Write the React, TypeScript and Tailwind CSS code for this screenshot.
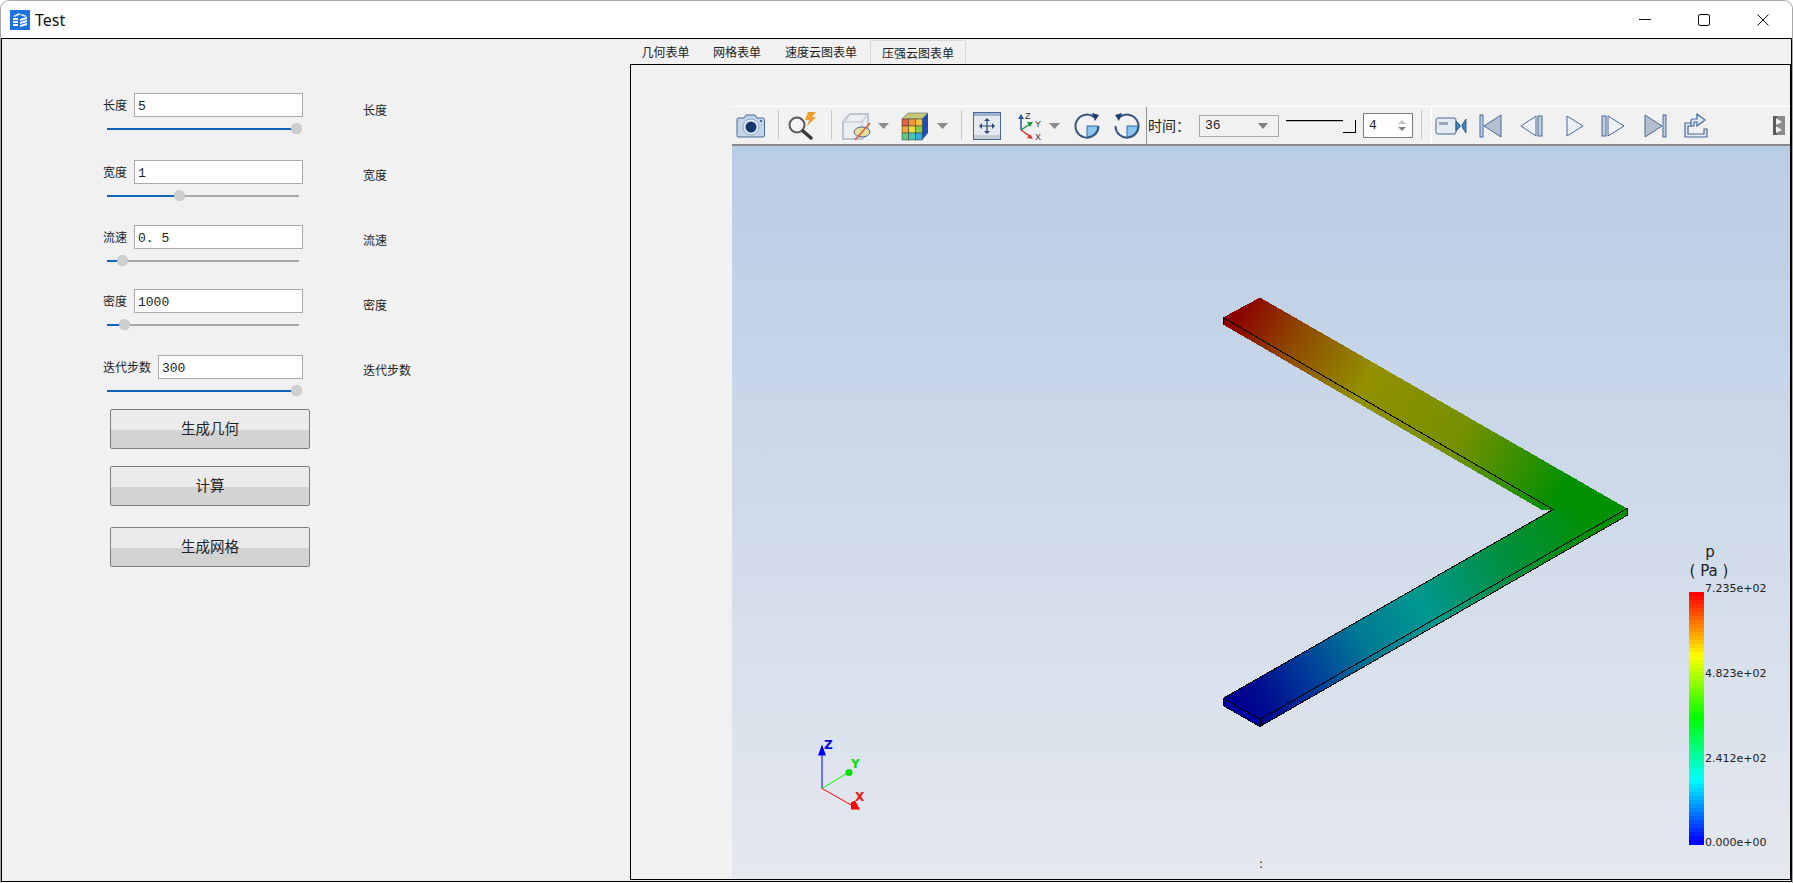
import React from 'react';

const cjk = "font-['Noto_Sans_CJK_SC','Noto_Sans',sans-serif]";

type Field = {
  label: string;
  value: string;
  handle: number;
  rowClass: string;
  noteClass: string;
};

// handle = pixels from the left end of the slider track
const fields: Field[] = [
  { label: '长度', value: '5', handle: 189, rowClass: 'mt-0', noteClass: 'mt-[9px]' },
  { label: '宽度', value: '1', handle: 72, rowClass: 'mt-[19px]', noteClass: 'mt-[7px]' },
  { label: '流速', value: '0. 5', handle: 15, rowClass: 'mt-[17px]', noteClass: 'mt-[7px]' },
  { label: '密度', value: '1000', handle: 17, rowClass: 'mt-[16px]', noteClass: 'mt-[8px]' },
  { label: '迭代步数', value: '300', handle: 189, rowClass: 'mt-[18px]', noteClass: 'mt-[7px]' },
];

const FormRow = ({ field }: { field: Field }) => (
  <div className={`flex items-start ${field.rowClass}`}>
    <div className="w-[200px]">
      <div className="flex h-[24px] items-center gap-[7px]">
        <span className={`${cjk} text-[12px] leading-none whitespace-nowrap text-[#222]`}>{field.label}</span>
        <input
          readOnly
          value={field.value}
          className="h-[24px] min-w-0 flex-1 border border-[#a9a9a9] bg-white px-[3px] pt-[2px] font-['Liberation_Mono',monospace] text-[13px] text-[#222] outline-none"
        />
      </div>
      <div className="relative ml-[4px] h-[24px] w-[192px]">
        <div className="absolute top-[11px] left-0 h-[2px] w-full bg-[#a9a9a9]" />
        <div className="absolute top-[11px] left-0 h-[2px] bg-[#0f66b8]" style={{ width: field.handle }} />
        <div
          className="absolute top-[6px] h-[11px] w-[11px] rounded-full border border-dotted border-[#bdbdbd] bg-[#cfcfcf]"
          style={{ left: field.handle - 5 }}
        />
      </div>
    </div>
    <span className={`${cjk} ml-[60px] text-[12px] leading-[16px] whitespace-nowrap text-[#222] ${field.noteClass}`}>
      {field.label}
    </span>
  </div>
);

const ActionButton = ({ text, className }: { text: string; className: string }) => (
  <button
    className={`${cjk} ml-[7px] flex h-[40px] w-[200px] items-center justify-center rounded-[2px] border border-[#7f7f7f] bg-[linear-gradient(#ebebeb_52%,#d3d3d3_52%)] pb-[2px] text-[14.5px] text-[#222] ${className}`}
  >
    {text}
  </button>
);

const Sep = ({ className }: { className: string }) => <div className={`h-[30px] w-[1px] bg-[#c8c8c8] ${className}`} />;

const Slot = ({ className = '', children }: { className?: string; children: React.ReactNode }) => (
  <div className={`flex h-full w-[38px] shrink-0 items-center justify-center ${className}`}>{children}</div>
);

const Caret = ({ className = '' }: { className?: string }) => (
  <div className={`flex h-full w-[14px] shrink-0 items-center justify-center ${className}`}>
    <svg width="13" height="8" viewBox="0 0 13 8">
      <path d="M1 1h11L6.500 7z" fill="#8a8a8a" />
    </svg>
  </div>
);

const AppLogo = () => (
  <svg width="20" height="20" viewBox="0 0 20 20">
    <rect width="20" height="20" fill="#1a73e0" />
    <path d="M3 6l6-3 2 1-6 3zM12 4l5 2-2 1-5-2z" fill="#dcebff" />
    <path d="M3 8h5v2H3zM3 11h5v2H3zM3 14h5v2H3z" fill="#fff" />
    <path d="M10 9l7-2v2l-7 2zM10 12l7-2v2l-7 2zM10 15l7-2v2l-7 2z" fill="#fff" />
  </svg>
);

const CameraIcon = () => (
  <svg width="30" height="26" viewBox="0 0 30 26">
    <path d="M2 5h6l2-3h9l2 3h6q1.500 0 1.500 1.500v16q0 1.500-1.500 1.500H2q-1 0-1-1.500v-16Q1 5 2 5z" fill="#c3d4e8" stroke="#47699a" />
    <circle cx="15" cy="14" r="8" fill="#e4ebf3" stroke="#8ea6c4" />
    <circle cx="15" cy="14" r="5.500" fill="#17366e" />
    <rect x="24" y="7" width="2" height="2" fill="#47699a" />
  </svg>
);

const ZoomIcon = () => (
  <svg width="32" height="30" viewBox="0 0 32 30">
    <circle cx="11" cy="14" r="7.500" fill="#f4f4f4" stroke="#5a5a5a" strokeWidth="2" />
    <path d="M17 20l8 7" stroke="#3a3a3a" strokeWidth="3.500" strokeLinecap="round" />
    <path d="M22 1h8l-4 5h4l-9 9 2-6h-4z" fill="#ef9f2e" />
  </svg>
);

const ClipIcon = () => (
  <svg width="32" height="30" viewBox="0 0 32 30">
    <path d="M2 11l7-8h18v19l-6 6H2z" fill="#eceef2" stroke="#bcc5d3" strokeWidth="2" />
    <path d="M2 11h19l6-8M21 11v17" fill="none" stroke="#c9d0db" strokeWidth="1.500" />
    <ellipse cx="21" cy="21" rx="8" ry="5" fill="#e6dc9c" stroke="#47699a" />
    <path d="M14 29L29 12" stroke="#d8582a" strokeWidth="1.500" />
  </svg>
);

const ScalarCubeIcon = () => {
  const cols = ['#e8603a', '#ef9b3a', '#f2c23c', '#f0a83a', '#e8dc3e', '#86d04c', '#5ec880', '#47c8b0', '#39a8e0'];
  return (
    <svg width="30" height="30" viewBox="0 0 30 30">
      <path d="M1 8l6-6h20l-6 6z" fill="#c8c878" stroke="#3a4a5a" strokeWidth="0.500" />
      <path d="M21 8l6-6v20l-6 7z" fill="#1c4fb8" />
      {cols.map((c, i) => (
        <rect key={i} x={1 + (i % 3) * 6.800} y={8 + Math.floor(i / 3) * 7} width="6.800" height="7" fill={c} stroke="#3a3a3a" strokeWidth="0.500" />
      ))}
    </svg>
  );
};

const FitIcon = () => (
  <svg width="28" height="30" viewBox="0 0 28 30">
    <rect x="0.500" y="1.500" width="27" height="27" fill="#e5e8ee" stroke="#47699a" />
    <rect x="1" y="2" width="26" height="3" fill="#9fb2cc" />
    <rect x="1" y="24" width="26" height="4" fill="#c6ccd6" />
    <path d="M14 9v12M8 15h12" stroke="#2e4a73" strokeWidth="1.200" />
    <path d="M14 7l-3 3h6zM14 23l-3-3h6zM6 15l3-3v6zM22 15l-3-3v6z" fill="#2e4a73" />
  </svg>
);

const AxesIcon = () => (
  <svg width="32" height="32" viewBox="0 0 32 32">
    <path d="M9 20V7" stroke="#2a56a8" strokeWidth="1.500" />
    <path d="M9 4l-3 5h6z" fill="#2a56a8" />
    <path d="M9 20l9-6" stroke="#1c9a3c" strokeWidth="1.500" />
    <path d="M21 12l-6 0 3 5z" fill="#1c9a3c" />
    <path d="M9 20l10 7" stroke="#e03030" strokeWidth="1.500" />
    <path d="M21 29l-6-1 3-4z" fill="#e03030" />
    <text x="13" y="9" className="font-['Liberation_Sans',sans-serif] text-[9px]" fill="#333">Z</text>
    <text x="23" y="17" className="font-['Liberation_Sans',sans-serif] text-[9px]" fill="#333">Y</text>
    <text x="23" y="30" className="font-['Liberation_Sans',sans-serif] text-[9px]" fill="#333">X</text>
  </svg>
);

// the quadrant stays lower right in both, only the arrow changes side
const RotateIcon = ({ flip = false }: { flip?: boolean }) => (
  <svg width="30" height="30" viewBox="0 0 30 30">
    <path d="M15 15h11a11 11 0 0 1-11 11z" fill="#8cc4ee" stroke="#2e6ca8" />
    <g transform={flip ? 'translate(30 0) scale(-1 1)' : undefined}>
      <path d="M22 6A11.500 11.500 0 1 0 26.500 15" fill="none" stroke="#35557f" strokeWidth="2" />
      <path d="M20 2l7 2-4 6z" fill="#1d3f73" />
    </g>
  </svg>
);

const VideoIcon = () => (
  <svg width="32" height="24" viewBox="0 0 32 24">
    <rect x="1" y="4" width="20" height="16" rx="2" fill="#e6ebf2" stroke="#47699a" />
    <rect x="4" y="8" width="9" height="3" fill="#9aa8ba" />
    <path d="M21 7l4 4v2l-4 4zM31 5l-4 6v2l4 6z" fill="#3a8ac0" stroke="#2e4a73" strokeWidth="0.800" />
  </svg>
);

const vcrFill = '#c3cfdf';
const vcrLine = '#47699a';

const FirstIcon = () => (
  <svg width="24" height="24" viewBox="0 0 24 24">
    <rect x="1" y="1" width="3" height="22" fill={vcrFill} stroke={vcrLine} />
    <path d="M22 1v22L5 12z" fill="#b4bfce" stroke={vcrLine} />
  </svg>
);

const PrevIcon = () => (
  <svg width="24" height="24" viewBox="0 0 24 24">
    <path d="M17 2v20L2 12z" fill="#eef1f5" stroke={vcrLine} />
    <rect x="19" y="2" width="4" height="20" fill={vcrFill} stroke={vcrLine} />
  </svg>
);

const PlayIcon = () => (
  <svg width="20" height="24" viewBox="0 0 20 24">
    <path d="M2 2v20l16-10z" fill="#eef1f5" stroke={vcrLine} />
  </svg>
);

const NextIcon = () => (
  <svg width="24" height="24" viewBox="0 0 24 24">
    <rect x="1" y="2" width="4" height="20" fill={vcrFill} stroke={vcrLine} />
    <path d="M7 2v20l16-10z" fill="#eef1f5" stroke={vcrLine} />
  </svg>
);

const LastIcon = () => (
  <svg width="24" height="24" viewBox="0 0 24 24">
    <path d="M2 1v22l17-11z" fill="#b4bfce" stroke={vcrLine} />
    <rect x="20" y="1" width="3" height="22" fill={vcrFill} stroke={vcrLine} />
  </svg>
);

const ExportIcon = () => (
  <svg width="26" height="26" viewBox="0 0 26 26">
    <path d="M2 24V10h7v3H5v8h16v-5h3v8z" fill="#e4eaf2" stroke={vcrLine} strokeWidth="1.200" />
    <path d="M8 13V8q0-2 2-2h4V1l8 6-8 6V9h-3v4z" fill="#e4eaf2" stroke={vcrLine} strokeWidth="1.200" />
  </svg>
);

const Toolbar = () => (
  <div className="flex h-[40px] w-full border-t border-b-2 border-t-white border-b-[#8a8a8a] bg-[#f1f1f1]">
    <Slot><CameraIcon /></Slot>
    <Sep className="mt-[3px] ml-[8px]" />
    <Slot className="ml-[4px]"><ZoomIcon /></Slot>
    <Sep className="mt-[3px] ml-[10px]" />
    <Slot className="ml-[6px]"><ClipIcon /></Slot>
    <Caret />
    <Slot className="ml-[7px]"><ScalarCubeIcon /></Slot>
    <Caret />
    <Sep className="mt-[3px] ml-[12px]" />
    <Slot className="ml-[6px]"><FitIcon /></Slot>
    <Slot className="ml-[3px]"><AxesIcon /></Slot>
    <Caret />
    <Slot className="ml-[7px]"><RotateIcon /></Slot>
    <Slot className="ml-[2px]"><RotateIcon flip /></Slot>
    <div className="h-[38px] w-[1px] bg-[#8f8f8f]" />
    <span className={`${cjk} ml-[1px] flex h-full w-[51px] items-center text-[14px] whitespace-nowrap text-[#222]`}>时间：</span>
    <div className="mt-[8px] flex h-[22px] w-[80px] items-center justify-between border border-[#a9a9a9] px-[5px] font-['Liberation_Mono',monospace] text-[13px] text-[#222]">
      <span>36</span>
      <svg width="10" height="7" viewBox="0 0 10 7" className="mr-[5px]">
        <path d="M0 0h10L5 6z" fill="#808080" />
      </svg>
    </div>
    <div className="relative ml-[7px] h-full w-[70px]">
      <div className="mt-[13px] h-[2px] w-[57px] border-t border-b border-t-black border-b-[#bbb]" />
      <div className="absolute top-[13px] right-0 h-[13px] w-[13px] border-r border-b border-black bg-[#f1f1f1]" />
    </div>
    <div className="mt-[6px] ml-[7px] flex h-[25px] w-[50px] items-center justify-between border border-[#7d7d7d] bg-white pr-[6px] pl-[5px] font-['Liberation_Mono',monospace] text-[13px] text-[#222]">
      <span>4</span>
      <svg width="8" height="13" viewBox="0 0 8 13">
        <path d="M0 5l4-4 4 4z" fill="#c4c4c4" />
        <path d="M0 8l4 4 4-4z" fill="#808080" />
      </svg>
    </div>
    <Sep className="mt-[3px] ml-[8px]" />
    <div className="ml-[9px] flex h-full flex-1 items-center border-l border-white pr-[3px]">
      <Slot><VideoIcon /></Slot>
      <Slot className="ml-[2px]"><FirstIcon /></Slot>
      <Slot className="ml-[2px]"><PrevIcon /></Slot>
      <Slot className="ml-[6px]"><PlayIcon /></Slot>
      <Slot><NextIcon /></Slot>
      <Slot className="ml-[4px]"><LastIcon /></Slot>
      <Slot className="ml-[3px]"><ExportIcon /></Slot>
      <svg width="12" height="19" viewBox="0 0 12 19" className="mr-[2px] ml-auto">
        <path d="M0 0h12v19H0z" fill="#8a8a8a" />
        <path d="M0 0h4v19H0z" fill="#5a5a5a" />
        <path d="M3 2l6 4-6 3zM3 10l6 4-6 3z" fill="#eee" />
      </svg>
    </div>
  </div>
);

// blue at the bottom of the scale, red at the top
const rainbow = (t: number) => {
  const ramp = (v: number) => Math.round(Math.min(1, Math.max(0, v)) * 255);
  const r = ramp((t - 0.5) * 4);
  const g = t < 0.75 ? ramp(t * 4) : ramp((1 - t) * 4);
  const b = ramp((0.5 - t) * 4);
  return `rgb(${r},${g},${b})`;
};

const bands = Array.from({ length: 63 }, (_, i) => i);

const legendTicks = [
  { y: 591, text: '7.235e+02' },
  { y: 676, text: '4.823e+02' },
  { y: 761, text: '2.412e+02' },
  { y: 845, text: '0.000e+00' },
];

const edge = { stroke: '#000', strokeWidth: 1 };

const Scene = () => (
  <svg viewBox="732 146 1058 732" className="absolute inset-0 h-full w-full" shapeRendering="crispEdges">
    <defs>
      <linearGradient id="upperLeg" gradientUnits="userSpaceOnUse" x1="1240" y1="307" x2="1590" y2="509">
        <stop offset="0" stopColor="#8b0000" />
        <stop offset="0.16" stopColor="#8f4a00" />
        <stop offset="0.36" stopColor="#929000" />
        <stop offset="0.63" stopColor="#769000" />
        <stop offset="0.78" stopColor="#3a9000" />
        <stop offset="0.92" stopColor="#009000" />
        <stop offset="1" stopColor="#009000" />
      </linearGradient>
      <linearGradient id="lowerLeg" gradientUnits="userSpaceOnUse" x1="1590" y1="509" x2="1240" y2="708">
        <stop offset="0" stopColor="#009000" />
        <stop offset="0.25" stopColor="#009040" />
        <stop offset="0.48" stopColor="#009890" />
        <stop offset="0.65" stopColor="#007a94" />
        <stop offset="0.8" stopColor="#00409a" />
        <stop offset="0.93" stopColor="#000f90" />
        <stop offset="1" stopColor="#000090" />
      </linearGradient>
    </defs>

    <polygon points="1223,317 1553,509 1541,509 1223,324" fill="url(#upperLeg)" />
    <polygon points="1260,719 1627,508 1627,515 1260,726" fill="url(#lowerLeg)" />
    <polygon points="1223,698 1260,719 1260,726 1223,705" fill="#0000a8" />
    <polygon points="1223,317 1260,297 1627,508 1553,509" fill="url(#upperLeg)" />
    <polygon points="1223,698 1553,509 1627,508 1260,719" fill="url(#lowerLeg)" />
    <path d="M1223 317V324M1223 317L1553 509L1223 698M1223 698V705L1260 726V719L1223 698M1260 719L1627 508V515L1260 726" fill="none" {...edge} />

    {bands.map((i) => (
      <rect
        key={i}
        x="1689"
        y={591 + (i * 253) / 63}
        width="15"
        height={253 / 63 + 0.5}
        fill={rainbow(1 - i / 62)}
      />
    ))}
    <g shapeRendering="auto" className="font-['DejaVu_Sans',sans-serif]" fill="#222">
      <text x="1710" y="556" textAnchor="middle" className="text-[15px] leading-none">p</text>
      <text x="1709" y="575" textAnchor="middle" className="text-[15px] leading-none">( Pa )</text>
      {legendTicks.map((t) => (
        <text key={t.text} x="1705" y={t.y} className="text-[11px]">{t.text}</text>
      ))}
      <text x="1259" y="867" className="text-[12px]" fill="#111">:</text>
    </g>

    <g shapeRendering="auto">
      <path d="M822 788V752" stroke="#0000ff" strokeWidth="1" />
      <path d="M822 744l-4 11h8z" fill="#0000ff" />
      <path d="M822 788l26-16" stroke="#00ff00" strokeWidth="1" />
      <ellipse cx="849" cy="772" rx="3.500" ry="3.500" fill="#00e000" />
      <path d="M822 788l30 17" stroke="#ff0000" strokeWidth="1" />
      <path d="M851 802l4-2 5 9h-9z" fill="#ff0000" />
      <g className="font-['DejaVu_Sans',sans-serif] text-[12px] font-bold">
        <text x="824" y="748" fill="#0000e8">Z</text>
        <text x="851" y="767" fill="#00e000">Y</text>
        <text x="855" y="800" fill="#ff1010">X</text>
      </g>
    </g>
  </svg>
);

const App = () => {
  return (
    <div className="h-[883px] w-[1793px] overflow-hidden bg-white">
      <div className="flex h-full flex-col rounded-t-[9px] border-x border-t border-[#a8a8a8] pb-[1px]">
        <div className="flex h-[37px] shrink-0 items-center rounded-t-[9px] bg-white pl-[9px]">
          <AppLogo />
          <span className="ml-[5px] font-['Noto_Sans',sans-serif] text-[16px] text-[#111]">Test</span>
          <div className="ml-auto flex h-full">
            <div className="flex h-full w-[59px] items-center justify-center">
              <div className="h-[1px] w-[12px] bg-[#111]" />
            </div>
            <div className="flex h-full w-[59px] items-center justify-center">
              <div className="h-[12px] w-[12px] rounded-[2px] border border-[#111]" />
            </div>
            <div className="flex h-full w-[59px] items-center justify-center">
              <svg width="12" height="12" viewBox="0 0 12 12">
                <path d="M0.500 0.500l11 11M11.500 0.500l-11 11" stroke="#111" />
              </svg>
            </div>
          </div>
        </div>

        <div className="flex min-h-0 flex-1 border border-black bg-[#f1f1f1]">
          <div className="w-[628px] shrink-0 pt-[54px] pl-[101px]">
            {fields.map((field) => (
              <FormRow key={field.label} field={field} />
            ))}
            <ActionButton text="生成几何" className="mt-[6px]" />
            <ActionButton text="计算" className="mt-[17px]" />
            <ActionButton text="生成网格" className="mt-[21px]" />
          </div>

          <div className="flex min-w-0 flex-1 flex-col pb-[1px]">
            <div className={`${cjk} flex h-[25px] shrink-0 items-end text-[12px] text-[#222]`}>
              <div className="flex h-[24px] w-[71px] items-center justify-center">几何表单</div>
              <div className="flex h-[24px] w-[72px] items-center justify-center">网格表单</div>
              <div className="flex h-[24px] w-[96px] items-center justify-center">速度云图表单</div>
              <div className="ml-[1px] flex h-[24px] w-[96px] items-center justify-center border-x border-t border-[#d9d9d9]">
                压强云图表单
              </div>
            </div>
            <div className="flex min-h-0 flex-1 flex-col border border-black pt-[41px] pl-[101px]">
              <Toolbar />
              <div className="relative min-h-0 flex-1 bg-[linear-gradient(#b9cde5,#e5e8ee)]">
                <Scene />
              </div>
            </div>
          </div>
        </div>
      </div>
    </div>
  );
};

export default App;
